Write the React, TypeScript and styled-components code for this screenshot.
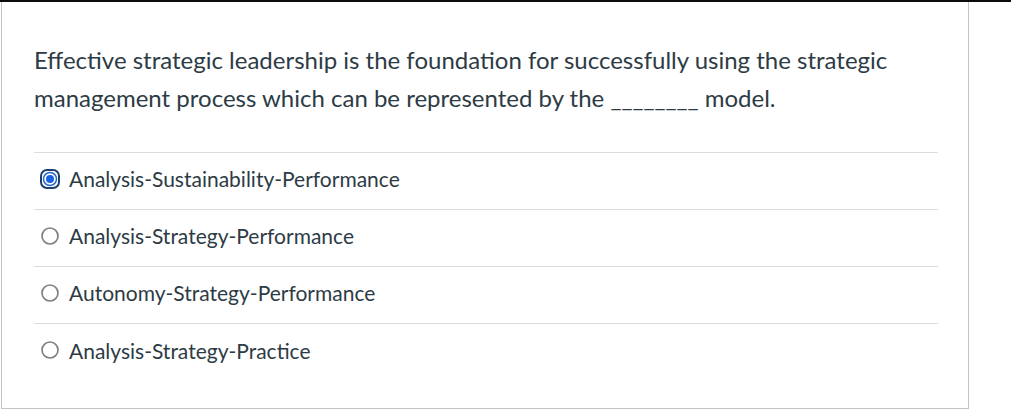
import React from 'react'
import styled, { createGlobalStyle } from 'styled-components'

const GlobalStyle = createGlobalStyle`
  html, body {
    margin: 0;
    padding: 0;
    background: #ffffff;
  }
  body {
    font-family: Lato, "Liberation Sans", sans-serif;
  }
`

const options = [
  'Analysis-Sustainability-Performance',
  'Analysis-Strategy-Performance',
  'Autonomy-Strategy-Performance',
  'Analysis-Strategy-Practice',
]

const RadioMark = ({ checked }: { checked: boolean }) =>
  checked ? (
    <svg width="20" height="20" viewBox="0 0 20 20">
      <rect x="1" y="1" width="18" height="18" rx="6" fill="none" stroke="#1c3f6e" strokeWidth="2" />
      <circle cx="10" cy="10" r="6.5" fill="#ffffff" stroke="#2a68c9" strokeWidth="1.5" />
      <circle cx="10" cy="10" r="4" fill="#1a63e0" />
    </svg>
  ) : (
    <svg width="20" height="20" viewBox="0 0 20 20">
      <circle cx="10" cy="10" r="8" fill="#ffffff" stroke="#808080" strokeWidth="1.7" />
    </svg>
  )

export default function App() {
  return (
    <>
      <GlobalStyle />
      <Page>
        <TopBar />
        <Card>
          <Question>
            Effective strategic leadership is the foundation for successfully using the strategic
            <br />
            management process which can be represented by the ________ model.
          </Question>
          <Answers>
            {options.map((o, i) => (
              <Answer key={o}>
                <RadioMark checked={i === 0} />
                <span>{o}</span>
              </Answer>
            ))}
          </Answers>
        </Card>
      </Page>
    </>
  )
}

const Page = styled.div`
  width: 1011px;
  height: 420px;
  background: #fff;
`

const TopBar = styled.div`
  height: 2px;
  background: #0b0b0b;
`

const Card = styled.div`
  margin-left: 1px;
  width: 968px;
  height: 407px;
  border: 1px solid #c4c4c4;
  border-top: none;
  box-sizing: border-box;
  padding: 39px 30px 0 32px;
`

const Question = styled.p`
  margin: 0;
  font-size: 24px;
  line-height: 38px;
  color: #2d3b45;
  white-space: nowrap;
`

const Answers = styled.div`
  margin-top: 35px;
  border-top: 1px solid #dcdcdc;
`

const Answer = styled.label`
  display: flex;
  align-items: center;
  gap: 9px;
  height: 57px;
  padding-left: 6px;
  padding-bottom: 5px;
  box-sizing: border-box;
  border-bottom: 1px solid #dcdcdc;
  font-size: 21px;
  color: #2d3b45;
  &:last-child {
    border-bottom: none;
  }
`
